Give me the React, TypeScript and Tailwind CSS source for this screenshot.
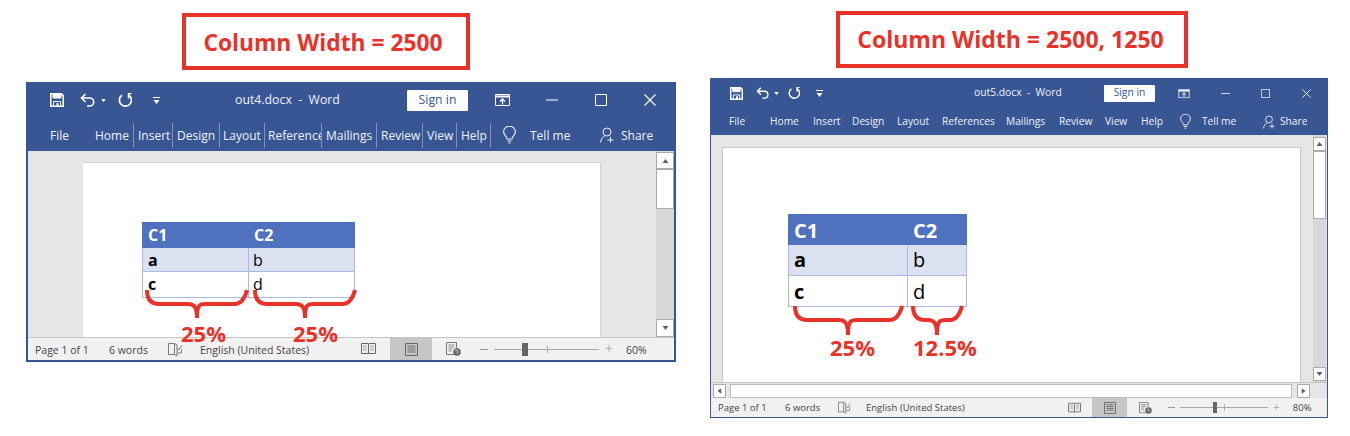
import type { ReactNode } from "react";

const RED = "#e8322a";

function SaveIcon({ className }: { className: string }) {
  return (
    <svg viewBox="0 0 14 14" className={className} fill="none" stroke="currentColor" strokeWidth="1.5">
      <path d="M.8.8h10.6l1.8 1.8v10.6H.8z" />
      <path d="M3 1v4h8V1" strokeWidth="1" fill="currentColor" />
      <path d="M3.5 13V8.5h7V13" strokeWidth="1" />
      <path d="M7.5 10v3" strokeWidth="2" />
    </svg>
  );
}

function UndoIcon({ className }: { className: string }) {
  return (
    <svg viewBox="0 0 16 14" className={className} fill="none" stroke="currentColor" strokeWidth="1.6">
      <path d="M5.5 1 1.5 5l4 4" />
      <path d="M1.5 5h8.2a4 4 0 0 1 4 4 4 4 0 0 1-4 4H7" />
    </svg>
  );
}

function RedoIcon({ className }: { className: string }) {
  return (
    <svg viewBox="0 0 14 14" className={className} fill="none" stroke="currentColor" strokeWidth="1.7">
      <path d="M4 2.2A6 6 0 1 0 10.5 2" />
      <path d="M10 .5h3.5M10.5.5v5" strokeWidth="1.5" />
    </svg>
  );
}

function CaretIcon({ className }: { className: string }) {
  return (
    <svg viewBox="0 0 6 4" className={className} fill="currentColor">
      <path d="M0 0h6L3 4z" />
    </svg>
  );
}

function QatIcon({ className }: { className: string }) {
  return (
    <svg viewBox="0 0 7 7" className={className} fill="currentColor">
      <path d="M0 0h7v1H0zM.5 3h6L3.5 7z" />
    </svg>
  );
}

function RestoreIcon({ className }: { className: string }) {
  return (
    <svg viewBox="0 0 15 12" className={className} fill="none" stroke="currentColor">
      <path d="M.5.5h14v11H.5z" />
      <path d="M.5 2.5h14" strokeWidth="2" />
      <path d="M7.5 10.5V5M5 7.5 7.5 5 10 7.5" strokeWidth="1.3" />
    </svg>
  );
}

function MinimizeIcon({ className }: { className: string }) {
  return (
    <svg viewBox="0 0 12 12" className={className} fill="none" stroke="currentColor">
      <path d="M0 6h12" />
    </svg>
  );
}

function MaximizeIcon({ className }: { className: string }) {
  return (
    <svg viewBox="0 0 12 12" className={className} fill="none" stroke="currentColor">
      <path d="M.5.5h11v11H.5z" />
    </svg>
  );
}

function CloseIcon({ className }: { className: string }) {
  return (
    <svg viewBox="0 0 12 12" className={className} fill="none" stroke="currentColor" strokeWidth="1.1">
      <path d="m.5.5 11 11M11.5.5l-11 11" />
    </svg>
  );
}

function BulbIcon({ className }: { className: string }) {
  return (
    <svg viewBox="0 0 13 18" className={className} fill="none" stroke="currentColor" strokeWidth="1.1">
      <path d="M4 13c0-3-3.400-4-3.400-7.400a5.900 5.400 0 0 1 11.800 0C12.400 9 9 10 9 13z" />
      <path d="M4.500 15h4M5.500 17h2" />
    </svg>
  );
}

function PersonIcon({ className }: { className: string }) {
  return (
    <svg viewBox="0 0 14 16" className={className} fill="none" stroke="currentColor" strokeWidth="1">
      <circle cx="7" cy="5" r="4" />
      <path d="M.5 15.500c.5-3.500 2.500-6 4.500-6.800M9 10.500h0M10.500 10v5.500M7.500 13h6" />
    </svg>
  );
}

function BookIcon({ className }: { className: string }) {
  return (
    <svg viewBox="0 0 15 15" className={className} fill="none" stroke="#777" strokeWidth="1">
      <path d="M.5 1.500h6v11h-6zM6.500 1.500 9 3v11l-2.500-1.500" />
      <path d="m9.500 6 1.500 2 3-5M9.500 11h4V7" strokeWidth=".9" />
    </svg>
  );
}

function ReadIcon({ className }: { className: string }) {
  return (
    <svg viewBox="0 0 15 14" className={className} fill="none" stroke="#666" strokeWidth="1">
      <path d="M.5 1.500h6.500l.5.5.5-.5h6.500v10H8l-.5.500-.5-.500H.5zM7.500 2v10" />
      <path d="M2 4h4M2 6h4M2 8h4M9 4h4M9 6h4M9 8h4" strokeWidth=".8" stroke="#999" />
    </svg>
  );
}

function PrintIcon({ className }: { className: string }) {
  return (
    <svg viewBox="0 0 13 13" className={className} fill="none" stroke="#666" strokeWidth="1">
      <path d="M.5.5h12v12H.5z" />
      <path d="M2.500 3h8M2.500 5h8M2.500 7h8M2.500 9h8" strokeWidth=".9" />
    </svg>
  );
}

function WebIcon({ className }: { className: string }) {
  return (
    <svg viewBox="0 0 15 14" className={className} fill="none" stroke="#777" strokeWidth="1">
      <path d="M8 12.500H.5V.5h10V6" />
      <path d="M2.500 3h6M2.500 5h6M2.500 7h4M2.500 9h3" strokeWidth=".8" />
      <circle cx="11" cy="10" r="3.800" fill="#666" stroke="none" />
      <path d="M9 8.500h2.500l.5 2-1.500 1" stroke="#ddd" strokeWidth=".8" />
    </svg>
  );
}

function Brace({ x1, x2, cx, y1, y2, tip }: { x1: number; x2: number; cx: number; y1: number; y2: number; tip: number }) {
  return (
    <path
      d={`M${x1} ${y1}c0 ${y2 - y1 - 6} 3 ${y2 - y1} 12 ${y2 - y1}H${cx - 9}c6 0 9 3 9 ${tip - y2}c0 ${y2 - tip} 3 ${y2 - tip} 9 ${y2 - tip}H${x2 - 12}c9 0 12 ${y1 - y2} 12 ${y1 - y2}`}
      fill="none"
      stroke={RED}
      strokeWidth="4"
    />
  );
}

function Tab({ className, children }: { className: string; children: ReactNode }) {
  return <div className={`shrink-0 overflow-hidden whitespace-nowrap ${className}`}>{children}</div>;
}

function ScrollBtn({ className, down }: { className: string; down?: boolean }) {
  return (
    <div className={`flex shrink-0 items-center justify-center border border-[#ababab] bg-white text-[#606060] ${className}`}>
      <CaretIcon className={`h-[4px] w-[7px] ${down ? "" : "rotate-180"}`} />
    </div>
  );
}

function Slider({ className, thumb, tick }: { className: string; thumb: string; tick: string }) {
  return (
    <div className={`relative h-[1px] shrink-0 bg-[#a8a8a8] ${className}`}>
      <div className={`absolute top-[-3px] h-[7px] w-[1px] bg-[#b0b0b0] ${tick}`} />
      <div className={`absolute bg-[#666666] ${thumb}`} />
    </div>
  );
}

function LeftWindow() {
  return (
    <div className="relative ml-[26px] mt-[12px] flex h-[280px] w-[650px] flex-col border-2 border-[#385693] bg-[#385693] font-['Open_Sans',sans-serif]">
      <div className="flex h-[32px] shrink-0 items-center text-white">
        <SaveIcon className="ml-[22px] h-[14px] w-[14px] shrink-0" />
        <UndoIcon className="ml-[16px] h-[14px] w-[16px] shrink-0" />
        <CaretIcon className="ml-[5px] h-[3px] w-[5px] shrink-0" />
        <RedoIcon className="ml-[12px] h-[14px] w-[14px] shrink-0" />
        <QatIcon className="ml-[21px] h-[7px] w-[7px] shrink-0" />
        <div className="ml-[75px] w-[106px] shrink-0 whitespace-pre text-[12.300px] text-[#eef1f7]">out4.docx  -  Word</div>
        <div className="ml-[66px] flex h-[21px] w-[61px] shrink-0 items-center justify-center rounded-[1px] bg-white text-[12.300px] text-[#385693]">Sign in</div>
        <RestoreIcon className="ml-[27px] h-[12px] w-[15px] shrink-0" />
        <MinimizeIcon className="ml-[36px] h-[12px] w-[12px] shrink-0" />
        <MaximizeIcon className="ml-[37px] h-[12px] w-[12px] shrink-0" />
        <CloseIcon className="ml-[37px] h-[12px] w-[12px] shrink-0" />
      </div>
      <div className="flex h-[35px] shrink-0 items-center pt-[3px] text-[12px] leading-[25px] text-[#eef1f7]">
        <Tab className="ml-[22px] w-[45px]">File</Tab>
        <Tab className="w-[39px] border-r border-[#7f95c0]">Home</Tab>
        <Tab className="w-[39px] border-r border-[#7f95c0] pl-[4px]">Insert</Tab>
        <Tab className="w-[47px] border-r border-[#7f95c0] pl-[4px]">Design</Tab>
        <Tab className="w-[45px] border-r border-[#7f95c0] pl-[3px]">Layout</Tab>
        <Tab className="w-[57px] border-r border-[#7f95c0] pl-[3px]">References</Tab>
        <Tab className="w-[55px] border-r border-[#7f95c0] pl-[4px]">Mailings</Tab>
        <Tab className="w-[46px] border-r border-[#7f95c0] pl-[4px]">Review</Tab>
        <Tab className="w-[34px] border-r border-[#7f95c0] pl-[4px]">View</Tab>
        <Tab className="w-[34px] border-r border-[#7f95c0] pl-[4px]">Help</Tab>
        <BulbIcon className="ml-[12px] h-[18px] w-[13px] shrink-0" />
        <Tab className="ml-[14px] w-[41px]">Tell me</Tab>
        <PersonIcon className="ml-[29px] h-[16px] w-[14px] shrink-0" />
        <Tab className="ml-[7px]">Share</Tab>
      </div>
      <div className="flex h-[186px] shrink-0 bg-[#e6e6e6]">
        <div className="ml-[55px] mt-[11px] w-[518px] shrink-0 border-r border-t border-[#d4d4d4] bg-white pl-[59px] pt-[59px]">
          <div className="grid w-[213px] grid-cols-[106px_105px] grid-rows-[26px_24px_25px] border-x border-b border-[#a9bbe2] text-[16px] leading-[24px] text-black">
            <div className="col-span-2 -mx-[1px] grid grid-cols-[106px_107px] bg-[#4f71be] pl-[6px] pt-[1px] font-bold text-white">
              <div>C1</div>
              <div>C2</div>
            </div>
            <div className="border-b border-r border-[#a9bbe2] bg-[#dbe1f1] pl-[5px] font-bold">a</div>
            <div className="border-b border-[#a9bbe2] bg-[#dbe1f1] pl-[4px]">b</div>
            <div className="border-r border-[#a9bbe2] pl-[5px] font-bold">c</div>
            <div className="pl-[4px]">d</div>
          </div>
        </div>
        <div className="ml-[55px] flex w-[18px] shrink-0 flex-col bg-[#d8d8d8] pt-[1px]">
          <ScrollBtn className="h-[17px]" />
          <div className="h-[40px] shrink-0 border border-[#ababab] bg-white" />
          <div className="flex-1" />
          <ScrollBtn className="h-[18px]" down />
        </div>
      </div>
      <div className="flex flex-1 items-center border-t border-[#c6c6c6] bg-[#f1f1f1] text-[10.500px] text-[#444444]">
        <div className="ml-[7px] w-[74px] shrink-0 pt-[3px]">Page 1 of 1</div>
        <div className="w-[59px] shrink-0 pt-[3px]">6 words</div>
        <BookIcon className="h-[15px] w-[15px] shrink-0" />
        <div className="ml-[17px] w-[161px] shrink-0 pt-[3px]">English (United States)</div>
        <ReadIcon className="h-[14px] w-[15px] shrink-0" />
        <div className="ml-[14px] flex h-full w-[42px] shrink-0 items-center justify-center bg-[#c6c6c6]">
          <PrintIcon className="h-[13px] w-[13px]" />
        </div>
        <WebIcon className="ml-[14px] h-[14px] w-[15px] shrink-0" />
        <div className="ml-[19px] h-[1px] w-[8px] shrink-0 bg-[#999999]" />
        <Slider className="ml-[6px] w-[105px]" thumb="left-[28px] top-[-6px] h-[13px] w-[6px]" tick="left-[53px]" />
        <div className="ml-[6px] shrink-0 text-[14px] font-light leading-none text-[#888888]">+</div>
        <div className="ml-[13px] shrink-0 pt-[3px]">60%</div>
      </div>
      <svg className="pointer-events-none absolute left-0 top-0 h-[276px] w-[646px] overflow-visible">
        <g transform="translate(-28 -84)">
          <Brace x1={147} x2={247} cx={197} y1={290} y2={304} tip={318} />
          <Brace x1={255} x2={355} cx={305} y1={290} y2={304} tip={318} />
        </g>
      </svg>
      <div className="absolute left-[153px] top-[236px] text-[22px] font-bold leading-[26px] text-[#e8322a]">25%</div>
      <div className="absolute left-[265px] top-[236px] text-[22px] font-bold leading-[26px] text-[#e8322a]">25%</div>
    </div>
  );
}

function RightWindow() {
  return (
    <div className="relative mt-[10px] flex h-[340px] w-[618px] flex-col border border-[#385693] bg-[#385693] font-['Open_Sans',sans-serif]">
      <div className="flex h-[28px] shrink-0 items-center text-white">
        <SaveIcon className="ml-[19px] h-[13px] w-[13px] shrink-0" />
        <UndoIcon className="ml-[13px] h-[12px] w-[14px] shrink-0" />
        <CaretIcon className="ml-[4px] h-[3px] w-[5px] shrink-0" />
        <RedoIcon className="ml-[9px] h-[12px] w-[12px] shrink-0" />
        <QatIcon className="ml-[16px] h-[7px] w-[7px] shrink-0" />
        <div className="ml-[151px] w-[88px] shrink-0 whitespace-pre text-[10.300px] text-[#eef1f7]">out5.docx  -  Word</div>
        <div className="ml-[42px] flex h-[17px] w-[51px] shrink-0 items-center justify-center rounded-[1px] bg-white text-[10.300px] text-[#385693]">Sign in</div>
        <RestoreIcon className="ml-[23px] h-[9px] w-[12px] shrink-0" />
        <MinimizeIcon className="ml-[31px] h-[9px] w-[9px] shrink-0" />
        <MaximizeIcon className="ml-[31px] h-[9px] w-[9px] shrink-0" />
        <CloseIcon className="ml-[32px] h-[9px] w-[9px] shrink-0" />
      </div>
      <div className="flex h-[28px] shrink-0 items-center pt-[1px] text-[10.200px] text-[#eef1f7]">
        <Tab className="ml-[18px] w-[41px]">File</Tab>
        <Tab className="w-[43px]">Home</Tab>
        <Tab className="w-[39px]">Insert</Tab>
        <Tab className="w-[45px]">Design</Tab>
        <Tab className="w-[45px]">Layout</Tab>
        <Tab className="w-[64px]">References</Tab>
        <Tab className="w-[53px]">Mailings</Tab>
        <Tab className="w-[46px]">Review</Tab>
        <Tab className="w-[36px]">View</Tab>
        <Tab className="w-[39px]">Help</Tab>
        <BulbIcon className="h-[15px] w-[11px] shrink-0" />
        <Tab className="ml-[11px] w-[35px]">Tell me</Tab>
        <PersonIcon className="ml-[26px] h-[14px] w-[12px] shrink-0" />
        <Tab className="ml-[5px]">Share</Tab>
      </div>
      <div className="flex h-[247px] shrink-0 bg-[#e6e6e6]">
        <div className="ml-[11px] mt-[12px] w-[579px] shrink-0 border-l border-r border-t border-[#c8c8c8] bg-white pl-[65px] pt-[66px]">
          <div className="grid w-[179px] grid-cols-[119px_58px] grid-rows-[31px_31px_30px] border-x border-b border-[#a9bbe2] text-[20px] leading-[30px] text-black">
            <div className="col-span-2 -mx-[1px] grid grid-cols-[119px_60px] bg-[#4f71be] pl-[6px] pt-[2px] font-bold text-white">
              <div>C1</div>
              <div>C2</div>
            </div>
            <div className="border-b border-r border-[#a9bbe2] bg-[#dbe1f1] pl-[5px] font-bold">a</div>
            <div className="border-b border-[#a9bbe2] bg-[#dbe1f1] pl-[5px]">b</div>
            <div className="border-r border-[#a9bbe2] pl-[5px] pt-[1px] font-bold">c</div>
            <div className="pl-[5px] pt-[1px]">d</div>
          </div>
        </div>
        <div className="ml-[12px] flex w-[13px] shrink-0 flex-col bg-[#d8d8d8] pb-[1px] pt-[2px]">
          <ScrollBtn className="h-[14px]" />
          <div className="h-[68px] shrink-0 border border-[#ababab] bg-white" />
          <div className="flex-1" />
          <ScrollBtn className="h-[14px]" down />
        </div>
      </div>
      <div className="flex h-[16px] shrink-0 items-center border-t border-[#c6c6c6] bg-[#e6e6e6]">
        <ScrollBtn className="ml-[2px] h-[14px] w-[13px] [&>svg]:rotate-90" down />
        <div className="ml-[4px] h-[14px] w-[562px] shrink-0 border border-[#bdbdbd] bg-white" />
        <ScrollBtn className="ml-[5px] h-[14px] w-[13px] [&>svg]:-rotate-90" down />
      </div>
      <div className="flex flex-1 items-center bg-[#f1f1f1] text-[9.500px] text-[#444444]">
        <div className="ml-[7px] w-[67px] shrink-0 pt-[2px]">Page 1 of 1</div>
        <div className="w-[53px] shrink-0 pt-[2px]">6 words</div>
        <BookIcon className="h-[13px] w-[13px] shrink-0" />
        <div className="ml-[15px] w-[202px] shrink-0 pt-[2px]">English (United States)</div>
        <ReadIcon className="h-[12px] w-[13px] shrink-0" />
        <div className="ml-[11px] flex h-full w-[35px] shrink-0 items-center justify-center bg-[#c6c6c6]">
          <PrintIcon className="h-[12px] w-[12px]" />
        </div>
        <WebIcon className="ml-[12px] h-[12px] w-[13px] shrink-0" />
        <div className="ml-[16px] h-[1px] w-[7px] shrink-0 bg-[#999999]" />
        <Slider className="ml-[5px] w-[88px]" thumb="left-[33px] top-[-5px] h-[11px] w-[4px]" tick="left-[44px]" />
        <div className="ml-[5px] shrink-0 text-[12px] font-light leading-none text-[#888888]">+</div>
        <div className="ml-[13px] shrink-0 pt-[2px]">80%</div>
      </div>
      <svg className="pointer-events-none absolute left-0 top-0 h-[338px] w-[616px] overflow-visible">
        <g transform="translate(-711 -79)">
          <Brace x1={795} x2={902} cx={848} y1={306} y2={320} tip={335} />
          <Brace x1={913} x2={962} cx={937} y1={306} y2={320} tip={335} />
        </g>
      </svg>
      <div className="absolute left-[119px] top-[255px] text-[22px] font-bold leading-[26px] text-[#e8322a]">25%</div>
      <div className="absolute left-[202px] top-[255px] text-[22px] font-bold leading-[26px] text-[#e8322a]">12.5%</div>
    </div>
  );
}

export default function App() {
  return (
    <div className="flex h-[436px] w-[1350px] overflow-hidden bg-white">
      <div className="w-[676px] shrink-0">
        <div className="ml-[182px] mt-[13px] flex h-[57px] w-[288px] items-center justify-center border-4 border-[#e8322a] pr-[6px] pt-[3px] font-['Open_Sans',sans-serif] text-[22.800px] font-bold text-[#e8322a]">
          Column Width = 2500
        </div>
        <LeftWindow />
      </div>
      <div className="ml-[34px] w-[618px] shrink-0">
        <div className="ml-[126px] mt-[11px] flex h-[57px] w-[352px] items-center justify-center border-4 border-[#e8322a] pr-[3px] font-['Open_Sans',sans-serif] text-[23px] font-bold text-[#e8322a]">
          Column Width = 2500, 1250
        </div>
        <RightWindow />
      </div>
    </div>
  );
}
